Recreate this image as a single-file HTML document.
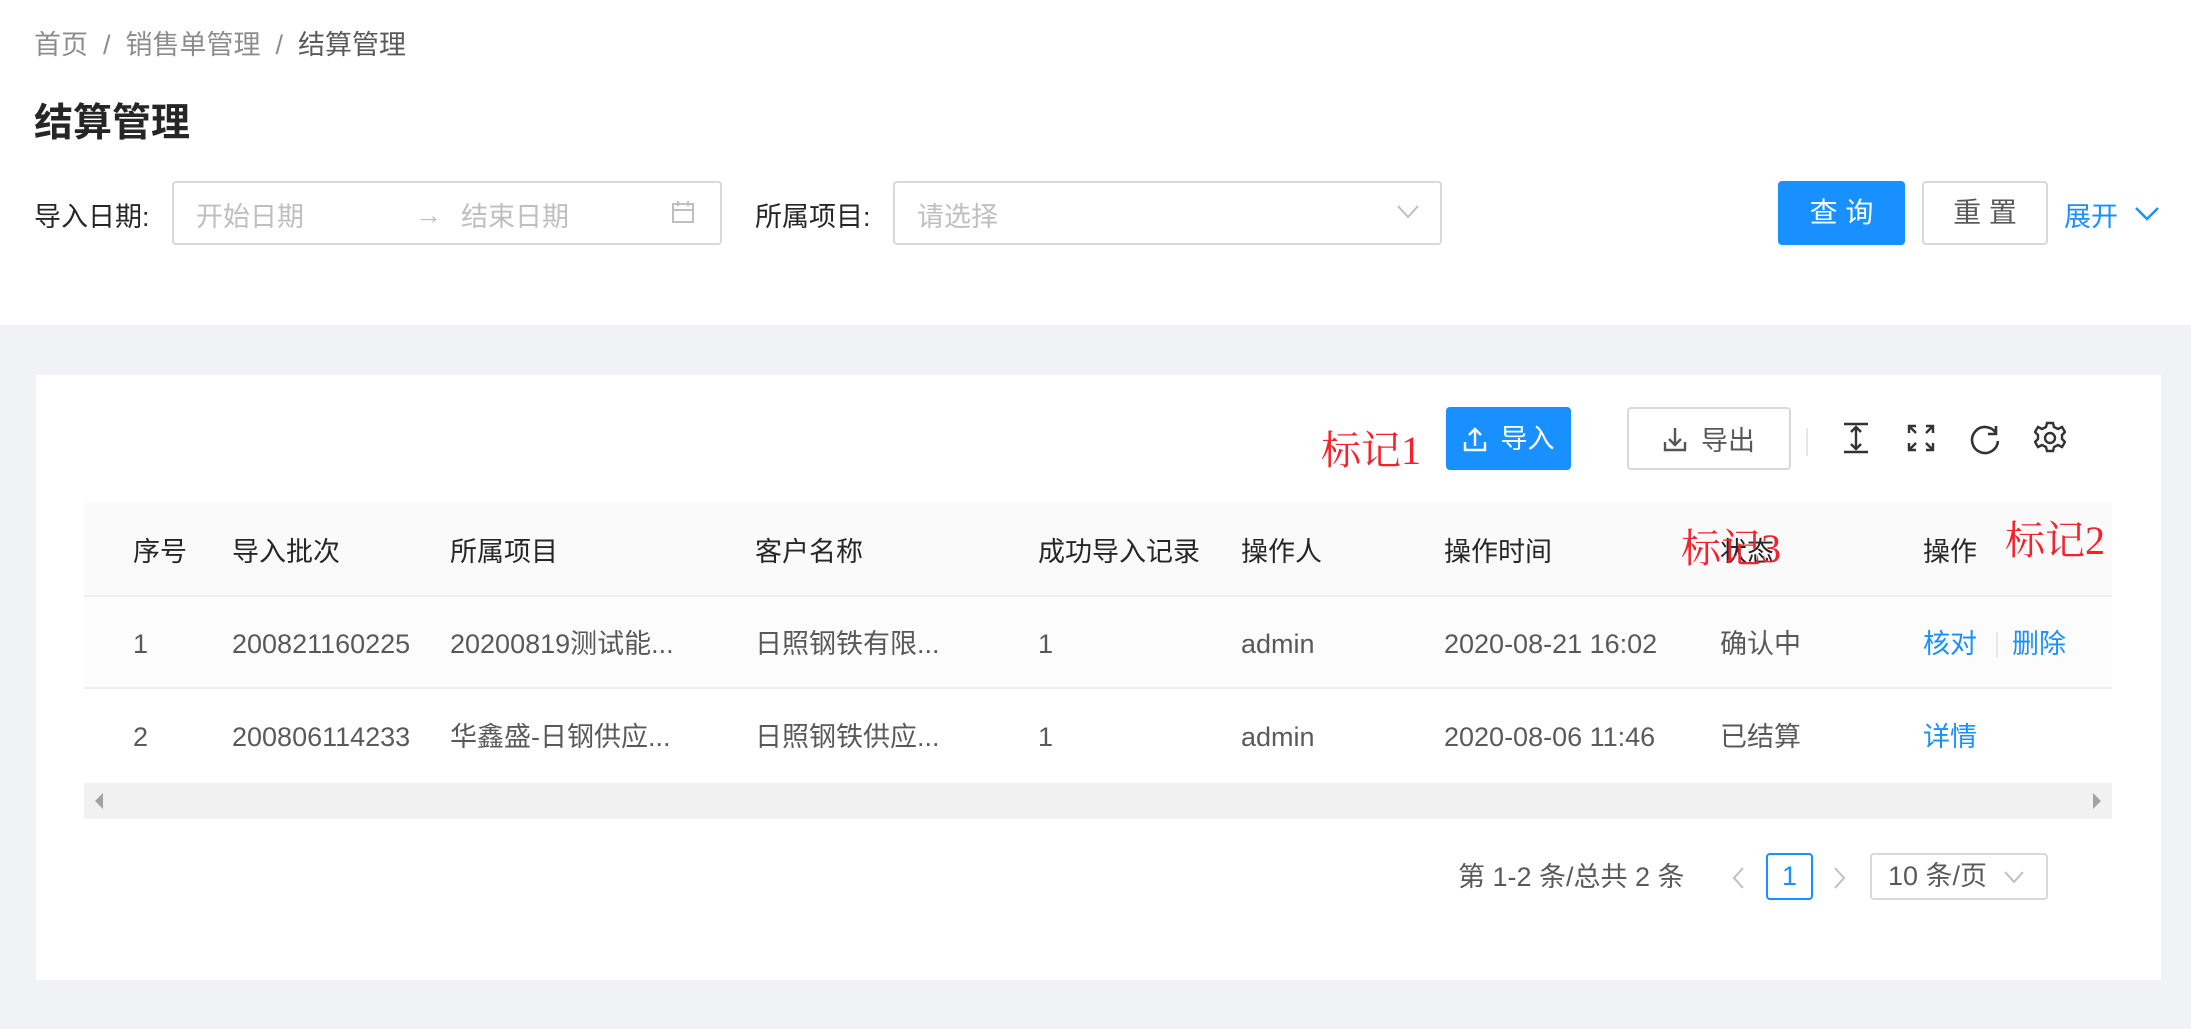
<!DOCTYPE html>
<html><head><meta charset="utf-8"><style>
*{margin:0;padding:0;box-sizing:border-box}
body{width:2191px;height:1029px;background:#f0f2f5;font-family:"Liberation Sans","Noto Sans CJK SC",sans-serif;font-size:27px;color:rgba(0,0,0,.65);position:relative;overflow:hidden}
.a{position:absolute;white-space:nowrap;line-height:40px}
.hdr{position:absolute;left:0;top:0;width:2191px;height:325px;background:#fff}
.box{position:absolute;border:2px solid #d9d9d9;border-radius:4px;background:#fff}
.ph{color:#bfbfbf}
.card{position:absolute;left:36px;top:375px;width:2125px;height:605px;background:#fff}
.red{color:#f5222d;font-family:"Liberation Serif","Noto Serif CJK SC",serif;font-size:40px;line-height:50px}
.blue{color:#1890ff}
.th{color:rgba(0,0,0,.85)}
</style></head><body>
<div class="hdr"></div>
<div class="a" style="left:34px;top:25px;font-size:27px;color:rgba(0,0,0,.45)">首页 &nbsp;/&nbsp; 销售单管理 &nbsp;/&nbsp; <span style="color:rgba(0,0,0,.65)">结算管理</span></div>
<div class="a" style="left:34px;top:99px;font-size:39px;line-height:50px;font-weight:bold;color:rgba(0,0,0,.85)">结算管理</div>
<div class="a th" style="left:34px;top:197px">导入日期:</div>
<div class="box" style="left:172px;top:181px;width:550px;height:64px"></div>
<div class="a ph" style="left:196px;top:197px">开始日期</div>
<div class="a ph" style="left:415px;top:195px">→</div>
<div class="a ph" style="left:461px;top:197px">结束日期</div>
<svg class="a" style="left:671px;top:200px" width="24" height="24" viewBox="0 0 24 24" fill="none" stroke="#bfbfbf" stroke-width="2"><rect x="2" y="4" width="20" height="18"/><line x1="2" y1="10" x2="22" y2="10"/><line x1="7" y1="1" x2="7" y2="6"/><line x1="17" y1="1" x2="17" y2="6"/></svg>
<div class="a th" style="left:755px;top:197px">所属项目:</div>
<div class="box" style="left:893px;top:181px;width:549px;height:64px"></div>
<div class="a ph" style="left:917px;top:197px">请选择</div>
<svg class="a" style="left:1397px;top:205px" width="22" height="14" viewBox="0 0 22 14" fill="none" stroke="#bfbfbf" stroke-width="2"><path d="M1 1L11 12L21 1"/></svg>
<div class="a" style="left:1778px;top:181px;width:127px;height:64px;background:#1890ff;border-radius:4px;color:#fff;text-align:center;line-height:64px;font-size:28px">查 询</div>
<div class="box" style="left:1922px;top:181px;width:126px;height:64px;text-align:center;line-height:60px;font-size:28px">重 置</div>
<div class="a blue" style="left:2064px;top:197px">展开</div>
<svg class="a" style="left:2135px;top:207px" width="24" height="14" viewBox="0 0 24 14" fill="none" stroke="#1890ff" stroke-width="2.4"><path d="M1 1L12 12L23 1"/></svg>

<div class="card"></div>
<div class="a red" style="left:1321px;top:426px">标记1</div>
<div class="a" style="left:1446px;top:407px;width:125px;height:63px;background:#1890ff;border-radius:4px;color:#fff;display:flex;align-items:center;justify-content:center;gap:14px;font-size:27px"><svg width="24" height="26" viewBox="0 0 24 26" fill="none" stroke="#fff" stroke-width="2.4"><path d="M12 20V3M6 9l6-6 6 6M2 16v8h20v-8"/></svg><span>导入</span></div>
<div class="box" style="left:1627px;top:407px;width:164px;height:63px;display:flex;align-items:center;justify-content:center;gap:14px;font-size:27px"><svg width="24" height="26" viewBox="0 0 24 26" fill="none" stroke="#555" stroke-width="2.4"><path d="M12 2v17M6 13l6 6 6-6M2 16v8h20v-8"/></svg><span>导出</span></div>
<div class="a" style="left:1806px;top:428px;width:2px;height:28px;background:#e8e8e8"></div>
<svg class="a" style="left:1842px;top:422px" width="28" height="32" viewBox="0 0 28 32" fill="none" stroke="#333" stroke-width="2.4"><path d="M2 2h24M2 30h24M14 5v22M9 10l5-5 5 5M9 22l5 5 5-5"/></svg>
<svg class="a" style="left:1907px;top:424px" width="28" height="28" viewBox="0 0 28 28" fill="none" stroke="#333" stroke-width="2.4"><path d="M2 9V2h7M2 2l7 7M26 9V2h-7M26 2l-7 7M2 19v7h7M2 26l7-7M26 19v7h-7M26 26l-7-7"/></svg>
<svg class="a" style="left:1969px;top:423px" width="32" height="32" viewBox="0 0 32 32" fill="none" stroke="#333" stroke-width="2.6"><path d="M27 10A13 13 0 1 0 29 18"/><path d="M27 3v8h-8" /></svg>
<svg class="a" style="left:2034px;top:421px" width="32" height="34" viewBox="0 0 32 34" fill="none" stroke="#333" stroke-width="2.4"><path d="M13 2h6l1 4 4 2 4-2 3 5-3 3v4l3 3-3 5-4-2-4 2-1 4h-6l-1-4-4-2-4 2-3-5 3-3v-4L1 11l3-5 4 2 4-2z"/><circle cx="16" cy="17" r="5"/></svg>

<div class="a" style="left:84px;top:503px;width:2028px;height:94px;background:#fafafa;border-bottom:2px solid #eee"></div>
<div class="a" style="left:84px;top:597px;width:2028px;height:92px;background:#fcfcfc;border-bottom:2px solid #eee"></div>
<div class="a" style="left:84px;top:783px;width:2028px;height:36px;background:#f1f1f1"></div>
<svg class="a" style="left:94px;top:793px" width="10" height="16"><path d="M9 0V16L1 8z" fill="#a3a3a3"/></svg>
<svg class="a" style="left:2092px;top:793px" width="10" height="16"><path d="M1 0V16L9 8z" fill="#a3a3a3"/></svg>

<div class="a th" style="left:133px;top:532px">序号</div>
<div class="a th" style="left:232px;top:532px">导入批次</div>
<div class="a th" style="left:450px;top:532px">所属项目</div>
<div class="a th" style="left:755px;top:532px">客户名称</div>
<div class="a th" style="left:1038px;top:532px">成功导入记录</div>
<div class="a th" style="left:1241px;top:532px">操作人</div>
<div class="a th" style="left:1444px;top:532px">操作时间</div>
<div class="a th" style="left:1720px;top:532px">状态</div>
<div class="a th" style="left:1923px;top:532px">操作</div>
<div class="a red" style="left:1681px;top:524px">标记3</div>
<div class="a red" style="left:2005px;top:516px">标记2</div>

<div class="a" style="left:133px;top:624px">1</div>
<div class="a" style="left:232px;top:624px">200821160225</div>
<div class="a" style="left:450px;top:624px">20200819测试能...</div>
<div class="a" style="left:755px;top:624px">日照钢铁有限...</div>
<div class="a" style="left:1038px;top:624px">1</div>
<div class="a" style="left:1241px;top:624px">admin</div>
<div class="a" style="left:1444px;top:624px">2020-08-21 16:02</div>
<div class="a" style="left:1720px;top:624px">确认中</div>
<div class="a blue" style="left:1923px;top:624px">核对</div>
<div class="a" style="left:1996px;top:632px;width:2px;height:26px;background:#e8e8e8"></div>
<div class="a blue" style="left:2012px;top:624px">删除</div>

<div class="a" style="left:133px;top:717px">2</div>
<div class="a" style="left:232px;top:717px">200806114233</div>
<div class="a" style="left:450px;top:717px">华鑫盛-日钢供应...</div>
<div class="a" style="left:755px;top:717px">日照钢铁供应...</div>
<div class="a" style="left:1038px;top:717px">1</div>
<div class="a" style="left:1241px;top:717px">admin</div>
<div class="a" style="left:1444px;top:717px">2020-08-06 11:46</div>
<div class="a" style="left:1720px;top:717px">已结算</div>
<div class="a blue" style="left:1923px;top:717px">详情</div>

<div class="a" style="left:1458px;top:857px">第 1-2 条/总共 2 条</div>
<svg class="a" style="left:1731px;top:866px" width="14" height="24" fill="none" stroke="#c0c0c0" stroke-width="2"><path d="M12 2L3 12l9 10"/></svg>
<div class="a" style="left:1766px;top:853px;width:47px;height:47px;border:2px solid #1890ff;border-radius:4px;color:#1890ff;text-align:center;line-height:43px">1</div>
<svg class="a" style="left:1833px;top:866px" width="14" height="24" fill="none" stroke="#c0c0c0" stroke-width="2"><path d="M2 2l9 10-9 10"/></svg>
<div class="box" style="left:1870px;top:853px;width:178px;height:47px;line-height:43px;padding-left:16px;white-space:nowrap">10 条/页</div>
<svg class="a" style="left:2004px;top:871px" width="20" height="12" fill="none" stroke="#bfbfbf" stroke-width="2"><path d="M1 1l9 10 9-10"/></svg>
</body></html>
